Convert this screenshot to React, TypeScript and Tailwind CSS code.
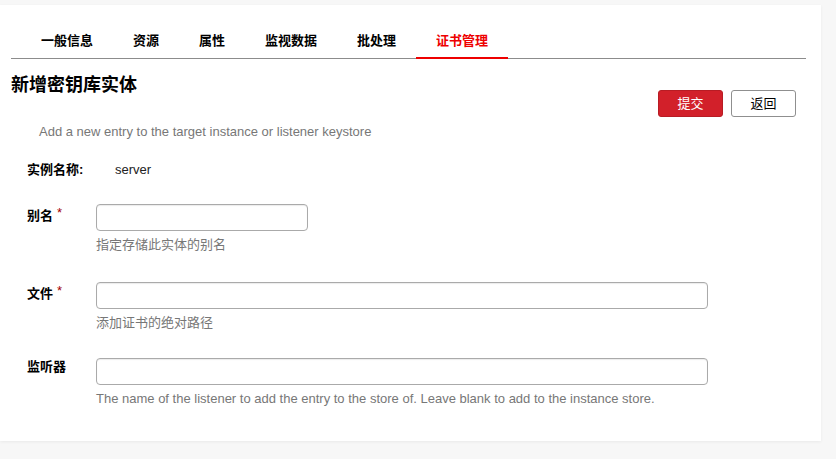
import React from "react";

const font = { fontFamily: '"Liberation Sans", "Noto Sans CJK SC", sans-serif' };

const tabs = ["一般信息", "资源", "属性", "监视数据", "批处理", "证书管理"];

function Field({
  label,
  required,
  wide,
  help,
  labelPad,
  mt,
}: {
  label: string;
  required?: boolean;
  wide?: boolean;
  help: string;
  labelPad: string;
  mt: string;
}) {
  return (
    <div className={`flex ${mt}`}>
      <div className={`w-[96px] pl-[27px] shrink-0 text-[13px] leading-[18px] font-bold text-black ${labelPad}`}>
        {label}
        {required && <span className="text-[#a40000] font-normal text-[13px] relative -top-[3px] ml-[4px]">*</span>}
      </div>
      <div className="flex flex-col">
        <input
          type="text"
          className={`${wide ? "w-[612px]" : "w-[212px]"} h-[27px] border border-[#aaaaaa] rounded-[4px] bg-white shadow-[inset_0_1px_1px_rgba(0,0,0,0.08)] outline-none`}
        />
        <div className="mt-[5px] text-[13px] leading-[18px] text-[#777777]">{help}</div>
      </div>
    </div>
  );
}

export default function App() {
  return (
    <div className="bg-[#f7f7f7] min-h-[459px] w-[836px] pt-[5px]" style={font}>
      <div className="w-[821px] h-[436px] bg-white shadow-[0_1px_3px_rgba(0,0,0,0.06)] overflow-hidden">
        {/* Tabs */}
        <div className="ml-[11px] w-[795px] mt-[27px] border-b border-[#8c8c8c] flex pl-[10px]">
          {tabs.map((t, i) => {
            const active = i === tabs.length - 1;
            return (
              <div
                key={t}
                className={`px-[20px] pb-[7px] text-[13px] leading-[18px] font-bold ${
                  active ? "text-[#ee0000] border-b-2 border-[#ee0000] -mb-px pb-[6px]" : "text-black"
                }`}
              >
                {t}
              </div>
            );
          })}
        </div>

        {/* Title + buttons */}
        <div className="flex justify-between items-start ml-[11px] w-[785px] mt-[14px]">
          <h1 className="text-[18px] leading-[24px] font-bold text-black">新增密钥库实体</h1>
          <div className="flex gap-[8px] mt-[17px]">
            <button className="w-[65px] h-[27px] rounded-[3px] bg-[#d2202a] border border-[#b81c24] text-white text-[13px]">
              提交
            </button>
            <button className="w-[65px] h-[27px] rounded-[3px] bg-white border border-[#8f8f8f] text-black text-[13px]">
              返回
            </button>
          </div>
        </div>

        <div className="ml-[39px] mt-[6px] text-[13px] leading-[18px] text-[#777777]">
          Add a new entry to the target instance or listener keystore
        </div>

        {/* Instance name */}
        <div className="flex mt-[20px] text-[13px] leading-[18px]">
          <div className="w-[115px] pl-[27px] shrink-0 font-bold text-black">实例名称:</div>
          <div className="text-[#222]">server</div>
        </div>

        <Field label="别名" required help="指定存储此实体的别名" labelPad="pt-[3px]" mt="mt-[25px]" />
        <Field label="文件" required wide help="添加证书的绝对路径" labelPad="pt-[3px]" mt="mt-[28px]" />
        <Field
          label="监听器"
          wide
          help="The name of the listener to add the entry to the store of. Leave blank to add to the instance store."
          labelPad="pt-0"
          mt="mt-[26px]"
        />
      </div>
    </div>
  );
}
